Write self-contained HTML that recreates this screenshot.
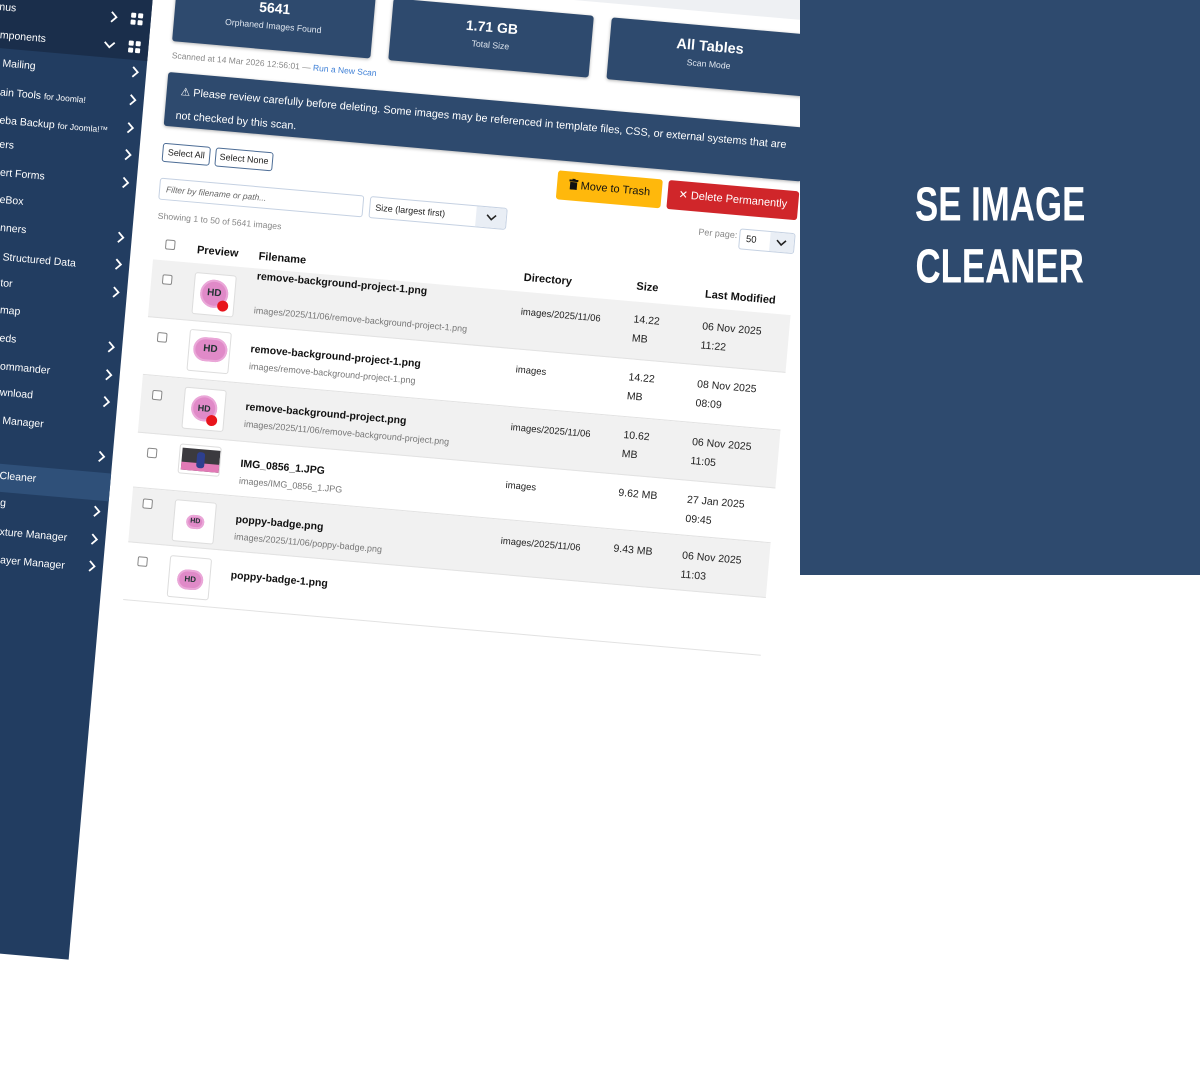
<!DOCTYPE html>
<html><head><meta charset="utf-8"><style>
*{margin:0;padding:0;box-sizing:border-box}
html,body{width:1200px;height:575px;overflow:hidden;background:#fff;font-family:"Liberation Sans",Arial,sans-serif}
.scene{position:absolute;left:0;top:0;width:10px;height:10px;transform-origin:0 0;transform:rotate(5deg)}
.a{position:absolute;white-space:nowrap}
.sb{position:absolute;left:-250px;top:-150px;width:402px;height:1100px;background:#223d61}
.sbtop{position:absolute;left:-250px;top:-150px;width:402px;height:198px;background:#1a2e4b}
.act{position:absolute;left:-250px;top:462px;width:402px;height:28px;background:#2f5079}
.si{position:absolute;color:#fff;font-size:10.5px;line-height:14px;white-space:nowrap}
.si small{font-size:8.5px}
.chev{position:absolute;width:8px;height:12px}
.grid{position:absolute;width:12px;height:12px}
.grid i{position:absolute;width:5px;height:5px;background:#fff;border-radius:1px}
.stat{position:absolute;top:-36px;height:62px;background:#2e4a6e;border-radius:3px;color:#fff;text-align:center;box-shadow:0 1px 3px rgba(0,0,0,.3)}
.stat b{position:absolute;left:0;right:0;top:11px;font-size:14px;line-height:18px}
.stat span{position:absolute;left:0;right:0;top:32px;font-size:8.7px;line-height:12px;color:#dfe6ef}
.btn{position:absolute;border:1px solid #4d6d96;border-radius:3px;font-size:9px;line-height:17px;text-align:center;color:#222;background:#fff}
.row{position:absolute;left:175px;width:640px;border-bottom:1px solid #e2e2e2}
.grey{background:#f1f1f1}
.cb{position:absolute;width:10px;height:10px;border:1px solid #888;border-radius:2px;background:#fff}
.th{position:absolute;font-size:11px;font-weight:bold;color:#111;line-height:14px;white-space:nowrap}
.fn{position:absolute;font-size:10.5px;font-weight:bold;color:#111;line-height:14px;white-space:nowrap}
.pt{position:absolute;font-size:9px;color:#777;line-height:12px;white-space:nowrap}
.td{position:absolute;font-size:10.5px;color:#222;line-height:19px;white-space:nowrap}
.dir{position:absolute;font-size:9.5px;color:#222;line-height:12px;white-space:nowrap}
.thumb{position:absolute;width:42px;height:42px;background:#fff;border:1px solid #ddd;border-radius:3px;overflow:hidden}
.badge{position:absolute;border-radius:50%;background:#e08ac8;color:#233;font-weight:bold;text-align:center;box-shadow:0 0 0 2px #eaa7d8 inset}
.dot{position:absolute;width:11px;height:11px;border-radius:50%;background:#e8141c}
.panel{position:absolute;left:800px;top:0;width:400px;height:575px;background:#2e4a6e;z-index:5}
.tw{position:absolute;left:800px;width:400px;text-align:center;z-index:6}
.title{display:inline-block;color:#fff;font-weight:bold;font-size:52px;line-height:56px;transform:scale(0.67,0.92)}
</style></head><body>
<div class="scene">
  <div class="a" style="left:152px;top:-200px;width:1300px;height:150px;background:#eef0f3"></div>
  <div class="sb"></div>
  <div class="sbtop"></div>
  <div class="act"></div>

  <div class="si" style="left:0px;top:0px">nus</div>
  <div class="si" style="left:3px;top:28px">mponents</div>
  <div class="si" style="left:8px;top:56px">Mailing</div>
  <div class="si" style="left:8px;top:85px">ain Tools <small>for Joomla!</small></div>
  <div class="si" style="left:10px;top:113px">eba Backup <small>for Joomla!™</small></div>
  <div class="si" style="left:12px;top:137px">ers</div>
  <div class="si" style="left:15px;top:165px">ert Forms</div>
  <div class="si" style="left:17px;top:192px">eBox</div>
  <div class="si" style="left:20px;top:220px">nners</div>
  <div class="si" style="left:25px;top:249px">Structured Data</div>
  <div class="si" style="left:25px;top:275px">tor</div>
  <div class="si" style="left:27px;top:302px">map</div>
  <div class="si" style="left:29px;top:330px">eds</div>
  <div class="si" style="left:32px;top:358px">ommander</div>
  <div class="si" style="left:34px;top:384px">wnload</div>
  <div class="si" style="left:39px;top:412px">Manager</div>
  <div class="si" style="left:41px;top:467px">Cleaner</div>
  <div class="si" style="left:44px;top:494px">g</div>
  <div class="si" style="left:46px;top:523px">xture Manager</div>
  <div class="si" style="left:49px;top:551px">ayer Manager</div>

  <svg class="chev" style="left:111px;top:1px" viewBox="0 0 8 12"><polyline points="1.5,1 6.5,6 1.5,11" fill="none" stroke="#fff" stroke-width="1.8"/></svg>
  <svg class="a" style="left:107px;top:31px;width:12px;height:8px" viewBox="0 0 12 8"><polyline points="1,1.5 6,6.5 11,1.5" fill="none" stroke="#fff" stroke-width="1.8"/></svg>
  <div class="grid" style="left:132px;top:1px"><i style="left:0;top:0"></i><i style="left:7px;top:0"></i><i style="left:0;top:7px"></i><i style="left:7px;top:7px"></i></div>
  <div class="grid" style="left:132px;top:29px"><i style="left:0;top:0"></i><i style="left:7px;top:0"></i><i style="left:0;top:7px"></i><i style="left:7px;top:7px"></i></div>

  <svg class="chev" style="left:137px;top:54px" viewBox="0 0 8 12"><polyline points="1.5,1 6.5,6 1.5,11" fill="none" stroke="#fff" stroke-width="1.8"/></svg>
  <svg class="chev" style="left:137px;top:82px" viewBox="0 0 8 12"><polyline points="1.5,1 6.5,6 1.5,11" fill="none" stroke="#fff" stroke-width="1.8"/></svg>
  <svg class="chev" style="left:137px;top:110px" viewBox="0 0 8 12"><polyline points="1.5,1 6.5,6 1.5,11" fill="none" stroke="#fff" stroke-width="1.8"/></svg>
  <svg class="chev" style="left:137px;top:137px" viewBox="0 0 8 12"><polyline points="1.5,1 6.5,6 1.5,11" fill="none" stroke="#fff" stroke-width="1.8"/></svg>
  <svg class="chev" style="left:137px;top:165px" viewBox="0 0 8 12"><polyline points="1.5,1 6.5,6 1.5,11" fill="none" stroke="#fff" stroke-width="1.8"/></svg>
  <svg class="chev" style="left:137px;top:220px" viewBox="0 0 8 12"><polyline points="1.5,1 6.5,6 1.5,11" fill="none" stroke="#fff" stroke-width="1.8"/></svg>
  <svg class="chev" style="left:137px;top:247px" viewBox="0 0 8 12"><polyline points="1.5,1 6.5,6 1.5,11" fill="none" stroke="#fff" stroke-width="1.8"/></svg>
  <svg class="chev" style="left:137px;top:275px" viewBox="0 0 8 12"><polyline points="1.5,1 6.5,6 1.5,11" fill="none" stroke="#fff" stroke-width="1.8"/></svg>
  <svg class="chev" style="left:137px;top:330px" viewBox="0 0 8 12"><polyline points="1.5,1 6.5,6 1.5,11" fill="none" stroke="#fff" stroke-width="1.8"/></svg>
  <svg class="chev" style="left:137px;top:358px" viewBox="0 0 8 12"><polyline points="1.5,1 6.5,6 1.5,11" fill="none" stroke="#fff" stroke-width="1.8"/></svg>
  <svg class="chev" style="left:137px;top:385px" viewBox="0 0 8 12"><polyline points="1.5,1 6.5,6 1.5,11" fill="none" stroke="#fff" stroke-width="1.8"/></svg>
  <svg class="chev" style="left:137px;top:440px" viewBox="0 0 8 12"><polyline points="1.5,1 6.5,6 1.5,11" fill="none" stroke="#fff" stroke-width="1.8"/></svg>
  <svg class="chev" style="left:137px;top:495px" viewBox="0 0 8 12"><polyline points="1.5,1 6.5,6 1.5,11" fill="none" stroke="#fff" stroke-width="1.8"/></svg>
  <svg class="chev" style="left:137px;top:523px" viewBox="0 0 8 12"><polyline points="1.5,1 6.5,6 1.5,11" fill="none" stroke="#fff" stroke-width="1.8"/></svg>
  <svg class="chev" style="left:137px;top:550px" viewBox="0 0 8 12"><polyline points="1.5,1 6.5,6 1.5,11" fill="none" stroke="#fff" stroke-width="1.8"/></svg>

  <div class="stat" style="left:175px;width:199px"><b>5641</b><span>Orphaned Images Found</span></div>
  <div class="stat" style="left:392px;width:201px"><b>1.71 GB</b><span>Total Size</span></div>
  <div class="stat" style="left:611px;width:201px"><b style="font-size:14.5px;top:12px">All Tables</b><span>Scan Mode</span></div>

  <div class="a" style="left:176px;top:34px;font-size:8.5px;color:#888;line-height:12px">Scanned at 14 Mar 2026 12:56:01 — <span style="color:#3d7fd6">Run a New Scan</span></div>

  <div class="a" style="left:174px;top:57px;width:640px;height:54px;background:#2e4a6e;border-radius:3px;box-shadow:0 1px 3px rgba(0,0,0,.3)"></div>
  <div class="a" style="left:188px;top:68px;font-size:10.8px;color:#fff;line-height:16px">⚠ Please review carefully before deleting. Some images may be referenced in template files, CSS, or external systems that are</div>
  <div class="a" style="left:185px;top:92px;font-size:10.8px;color:#fff;line-height:16px">not checked by this scan.</div>

  <div class="btn" style="left:175px;top:128px;width:48px;height:19px">Select All</div>
  <div class="btn" style="left:228px;top:128px;width:58px;height:19px">Select None</div>

  <div class="a" style="left:571px;top:121px;width:105px;height:29px;background:#ffb80c;border-radius:3px;font-size:11px;line-height:29px;text-align:center;color:#111">
    <svg style="width:9px;height:11px;vertical-align:-1px" viewBox="0 0 9 11"><rect x="0" y="1" width="9" height="2" fill="#111"/><rect x="3" y="0" width="3" height="2" fill="#111"/><rect x="1" y="3.5" width="7" height="7.5" fill="#111"/></svg> Move to Trash</div>
  <div class="a" style="left:682px;top:121px;width:131px;height:29px;background:#d0262a;border-radius:3px;font-size:11px;line-height:29px;text-align:center;color:#fff">✕ Delete Permanently</div>

  <div class="a" style="left:175px;top:163px;width:205px;height:22px;border:1px solid #c5d1e2;border-radius:3px;font-size:8.5px;line-height:20px;color:#666;font-style:italic;padding-left:6px">Filter by filename or path...</div>
  <div class="a" style="left:386px;top:163px;width:138px;height:22px;border:1px solid #c5d1e2;border-radius:3px;font-size:9px;line-height:20px;color:#222;padding-left:5px;overflow:hidden">Size (largest first)
    <div class="a" style="right:0;top:0;width:30px;height:20px;background:#e9eef5"><svg style="position:absolute;left:10px;top:6px;width:11px;height:8px" viewBox="0 0 11 8"><polyline points="1,1.5 5.5,6 10,1.5" fill="none" stroke="#222" stroke-width="1.6"/></svg></div></div>

  <div class="a" style="left:176px;top:195px;font-size:8.7px;color:#888;line-height:12px">Showing 1 to 50 of 5641 images</div>
  <div class="a" style="left:716px;top:164px;font-size:9px;color:#888;line-height:12px">Per page:</div>
  <div class="a" style="left:757px;top:163px;width:56px;height:21px;border:1px solid #c5d1e2;border-radius:3px;font-size:9.5px;line-height:19px;padding-left:6px;color:#222;overflow:hidden">50
    <div class="a" style="right:0;top:0;width:24px;height:19px;background:#e9eef5"><svg style="position:absolute;left:6px;top:6px;width:11px;height:8px" viewBox="0 0 11 8"><polyline points="1,1.5 5.5,6 10,1.5" fill="none" stroke="#222" stroke-width="1.6"/></svg></div></div>

  <div class="cb" style="left:186px;top:224px"></div>
  <div class="th" style="left:218px;top:225px">Preview</div>
  <div class="th" style="left:280px;top:226px">Filename</div>
  <div class="th" style="left:546px;top:224px">Directory</div>
  <div class="th" style="left:659px;top:223px">Size</div>
  <div class="th" style="left:728px;top:225px">Last Modified</div>

  <div class="row grey" style="top:245px;height:58px"></div>
  <div class="row" style="top:303px;height:58px"></div>
  <div class="row grey" style="top:361px;height:58px"></div>
  <div class="row" style="top:419px;height:55px"></div>
  <div class="row grey" style="top:474px;height:55px"></div>
  <div class="row" style="top:529px;height:58px"></div>

  <div class="cb" style="left:186px;top:259px"></div>
  <div class="thumb" style="left:218px;top:254px"><div class="badge" style="left:6px;top:5px;width:28px;height:28px;font-size:10px;line-height:28px">HD</div><div class="dot" style="left:24px;top:25px"></div></div>
  <div class="fn" style="left:280px;top:246px">remove-background-project-1.png</div>
  <div class="pt" style="left:280px;top:281px">images/2025/11/06/remove-background-project-1.png</div>
  <div class="dir" style="left:546px;top:260px">images/2025/11/06</div>
  <div class="td" style="left:659px;top:254px">14.22<br>MB</div>
  <div class="td" style="left:728px;top:255px">06 Nov 2025<br>11:22</div>

  <div class="cb" style="left:186px;top:317px"></div>
  <div class="thumb" style="left:218px;top:311px"><div class="badge" style="left:4px;top:6px;width:34px;height:24px;font-size:10px;line-height:24px;border-radius:14px">HD</div></div>
  <div class="fn" style="left:280px;top:319px">remove-background-project-1.png</div>
  <div class="pt" style="left:280px;top:337px">images/remove-background-project-1.png</div>
  <div class="dir" style="left:546px;top:318px">images</div>
  <div class="td" style="left:659px;top:312px">14.22<br>MB</div>
  <div class="td" style="left:728px;top:313px">08 Nov 2025<br>08:09</div>

  <div class="cb" style="left:186px;top:375px"></div>
  <div class="thumb" style="left:218px;top:369px"><div class="badge" style="left:7px;top:6px;width:26px;height:26px;font-size:9px;line-height:26px">HD</div><div class="dot" style="left:23px;top:25px"></div></div>
  <div class="fn" style="left:280px;top:377px">remove-background-project.png</div>
  <div class="pt" style="left:280px;top:395px">images/2025/11/06/remove-background-project.png</div>
  <div class="dir" style="left:546px;top:376px">images/2025/11/06</div>
  <div class="td" style="left:659px;top:370px">10.62<br>MB</div>
  <div class="td" style="left:728px;top:371px">06 Nov 2025<br>11:05</div>

  <div class="cb" style="left:186px;top:433px"></div>
  <div class="thumb" style="left:218px;top:426px;height:30px"><div class="a" style="left:2px;top:3px;width:38px;height:22px;background:#3b3a3f"></div><div class="a" style="left:2px;top:17px;width:38px;height:8px;background:#e27ab6"></div><div class="a" style="left:17px;top:6px;width:8px;height:16px;background:#2d3f8f;border-radius:3px"></div></div>
  <div class="fn" style="left:280px;top:434px">IMG_0856_1.JPG</div>
  <div class="pt" style="left:280px;top:452px">images/IMG_0856_1.JPG</div>
  <div class="dir" style="left:546px;top:434px">images</div>
  <div class="td" style="left:659px;top:428px">9.62 MB</div>
  <div class="td" style="left:728px;top:429px">27 Jan 2025<br>09:45</div>

  <div class="cb" style="left:186px;top:484px"></div>
  <div class="thumb" style="left:218px;top:482px"><div class="badge" style="left:12px;top:13px;width:18px;height:14px;font-size:7px;line-height:14px;border-radius:8px">HD</div></div>
  <div class="fn" style="left:280px;top:490px">poppy-badge.png</div>
  <div class="pt" style="left:280px;top:508px">images/2025/11/06/poppy-badge.png</div>
  <div class="dir" style="left:546px;top:490px">images/2025/11/06</div>
  <div class="td" style="left:659px;top:484px">9.43 MB</div>
  <div class="td" style="left:728px;top:485px">06 Nov 2025<br>11:03</div>

  <div class="cb" style="left:186px;top:542px"></div>
  <div class="thumb" style="left:218px;top:538px"><div class="badge" style="left:8px;top:12px;width:26px;height:20px;font-size:8px;line-height:20px;border-radius:12px">HD</div></div>
  <div class="fn" style="left:280px;top:546px">poppy-badge-1.png</div>
</div>

<div class="panel"></div>
<div class="tw" style="top:177px"><span class="title">SE IMAGE</span></div>
<div class="tw" style="top:239px"><span class="title">CLEANER</span></div>
</body></html>
